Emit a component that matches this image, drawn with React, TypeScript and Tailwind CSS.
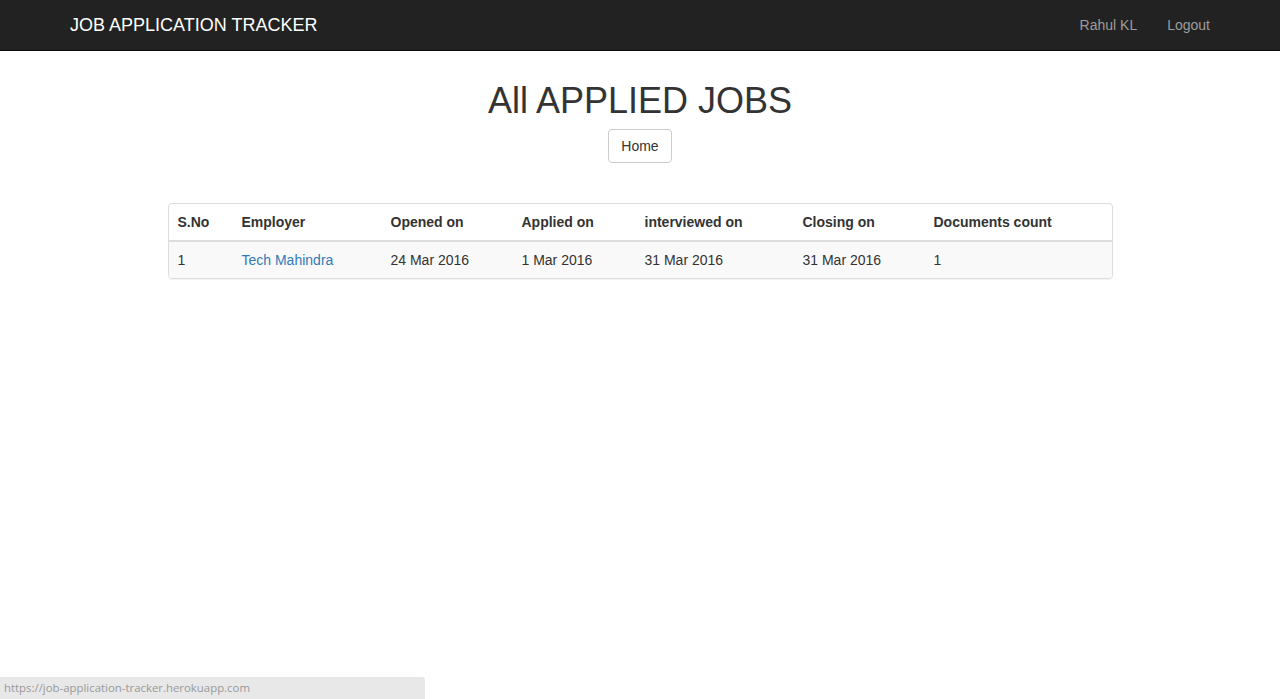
import React from "react";

const jobs = [
  {
    sno: "1",
    employer: "Tech Mahindra",
    opened: "24 Mar 2016",
    applied: "1 Mar 2016",
    interviewed: "31 Mar 2016",
    closing: "31 Mar 2016",
    docs: "1",
  },
];

export default function App() {
  return (
    <div className="min-h-[699px] bg-white text-[14px] leading-[20px] text-[#333] font-['Liberation_Sans',Arial,sans-serif]">
      {/* navbar */}
      <nav className="h-[51px] border-b border-[#080808] bg-[#222]">
        <div className="mx-auto flex w-[1170px] items-center justify-between px-[15px]">
          <a href="#" className="block py-[15px] text-[18px] leading-[20px] text-white">
            JOB APPLICATION TRACKER
          </a>
          <ul className="-mr-[15px] flex">
            <li>
              <a href="#" className="block px-[15px] py-[15px] text-[#9d9d9d]">
                Rahul KL
              </a>
            </li>
            <li>
              <a href="#" className="block px-[15px] py-[15px] text-[#9d9d9d]">
                Logout
              </a>
            </li>
          </ul>
        </div>
      </nav>

      <main className="mx-auto w-[1170px] px-[15px]">
        <h1 className="mt-[30px] mb-[8px] text-center text-[36px] leading-[39.6px] font-normal text-[#333]">
          All APPLIED JOBS
        </h1>
        <div className="flex justify-center">
          <button
            type="button"
            className="rounded-[4px] border border-[#ccc] bg-white px-[12px] py-[6px] text-[14px] leading-[20px] text-[#333]"
          >
            Home
          </button>
        </div>

        {/* jobs table */}
        <div className="mx-auto mt-[40px] w-[945px] overflow-hidden rounded-[4px] border border-[#ddd] shadow-[0_1px_1px_rgba(0,0,0,0.05)]">
          <table className="w-full table-fixed border-collapse text-left">
            <colgroup>
              <col className="w-[64px]" />
              <col className="w-[149px]" />
              <col className="w-[131px]" />
              <col className="w-[123px]" />
              <col className="w-[158px]" />
              <col className="w-[131px]" />
              <col />
            </colgroup>
            <thead>
              <tr className="border-b-2 border-[#ddd]">
                <th className="py-[8px] pl-[9px] pr-[7px] font-bold">S.No</th>
                <th className="py-[8px] pl-[9px] pr-[7px] font-bold">Employer</th>
                <th className="py-[8px] pl-[9px] pr-[7px] font-bold">Opened on</th>
                <th className="py-[8px] pl-[9px] pr-[7px] font-bold">Applied on</th>
                <th className="py-[8px] pl-[9px] pr-[7px] font-bold">interviewed on</th>
                <th className="py-[8px] pl-[9px] pr-[7px] font-bold">Closing on</th>
                <th className="py-[8px] pl-[9px] pr-[7px] font-bold">Documents count</th>
              </tr>
            </thead>
            <tbody>
              {jobs.map((job) => (
                <tr key={job.sno} className="bg-[#f9f9f9]">
                  <td className="py-[8px] pl-[9px] pr-[7px]">{job.sno}</td>
                  <td className="py-[8px] pl-[9px] pr-[7px]">
                    <a href="#" className="text-[#337ab7]">
                      {job.employer}
                    </a>
                  </td>
                  <td className="py-[8px] pl-[9px] pr-[7px]">{job.opened}</td>
                  <td className="py-[8px] pl-[9px] pr-[7px]">{job.applied}</td>
                  <td className="py-[8px] pl-[9px] pr-[7px]">{job.interviewed}</td>
                  <td className="py-[8px] pl-[9px] pr-[7px]">{job.closing}</td>
                  <td className="py-[8px] pl-[9px] pr-[7px]">{job.docs}</td>
                </tr>
              ))}
            </tbody>
          </table>
        </div>
      </main>

      {/* browser status bubble */}
      <div className="fixed bottom-0 left-0 h-[22px] w-[425px] rounded-tr-[3px] bg-[#e8e8e8] pl-[4px] text-[11.4px] leading-[22px] text-[#999] font-['Open_Sans','DejaVu_Sans',sans-serif]">
        https://job-application-tracker.herokuapp.com
      </div>
    </div>
  );
}
